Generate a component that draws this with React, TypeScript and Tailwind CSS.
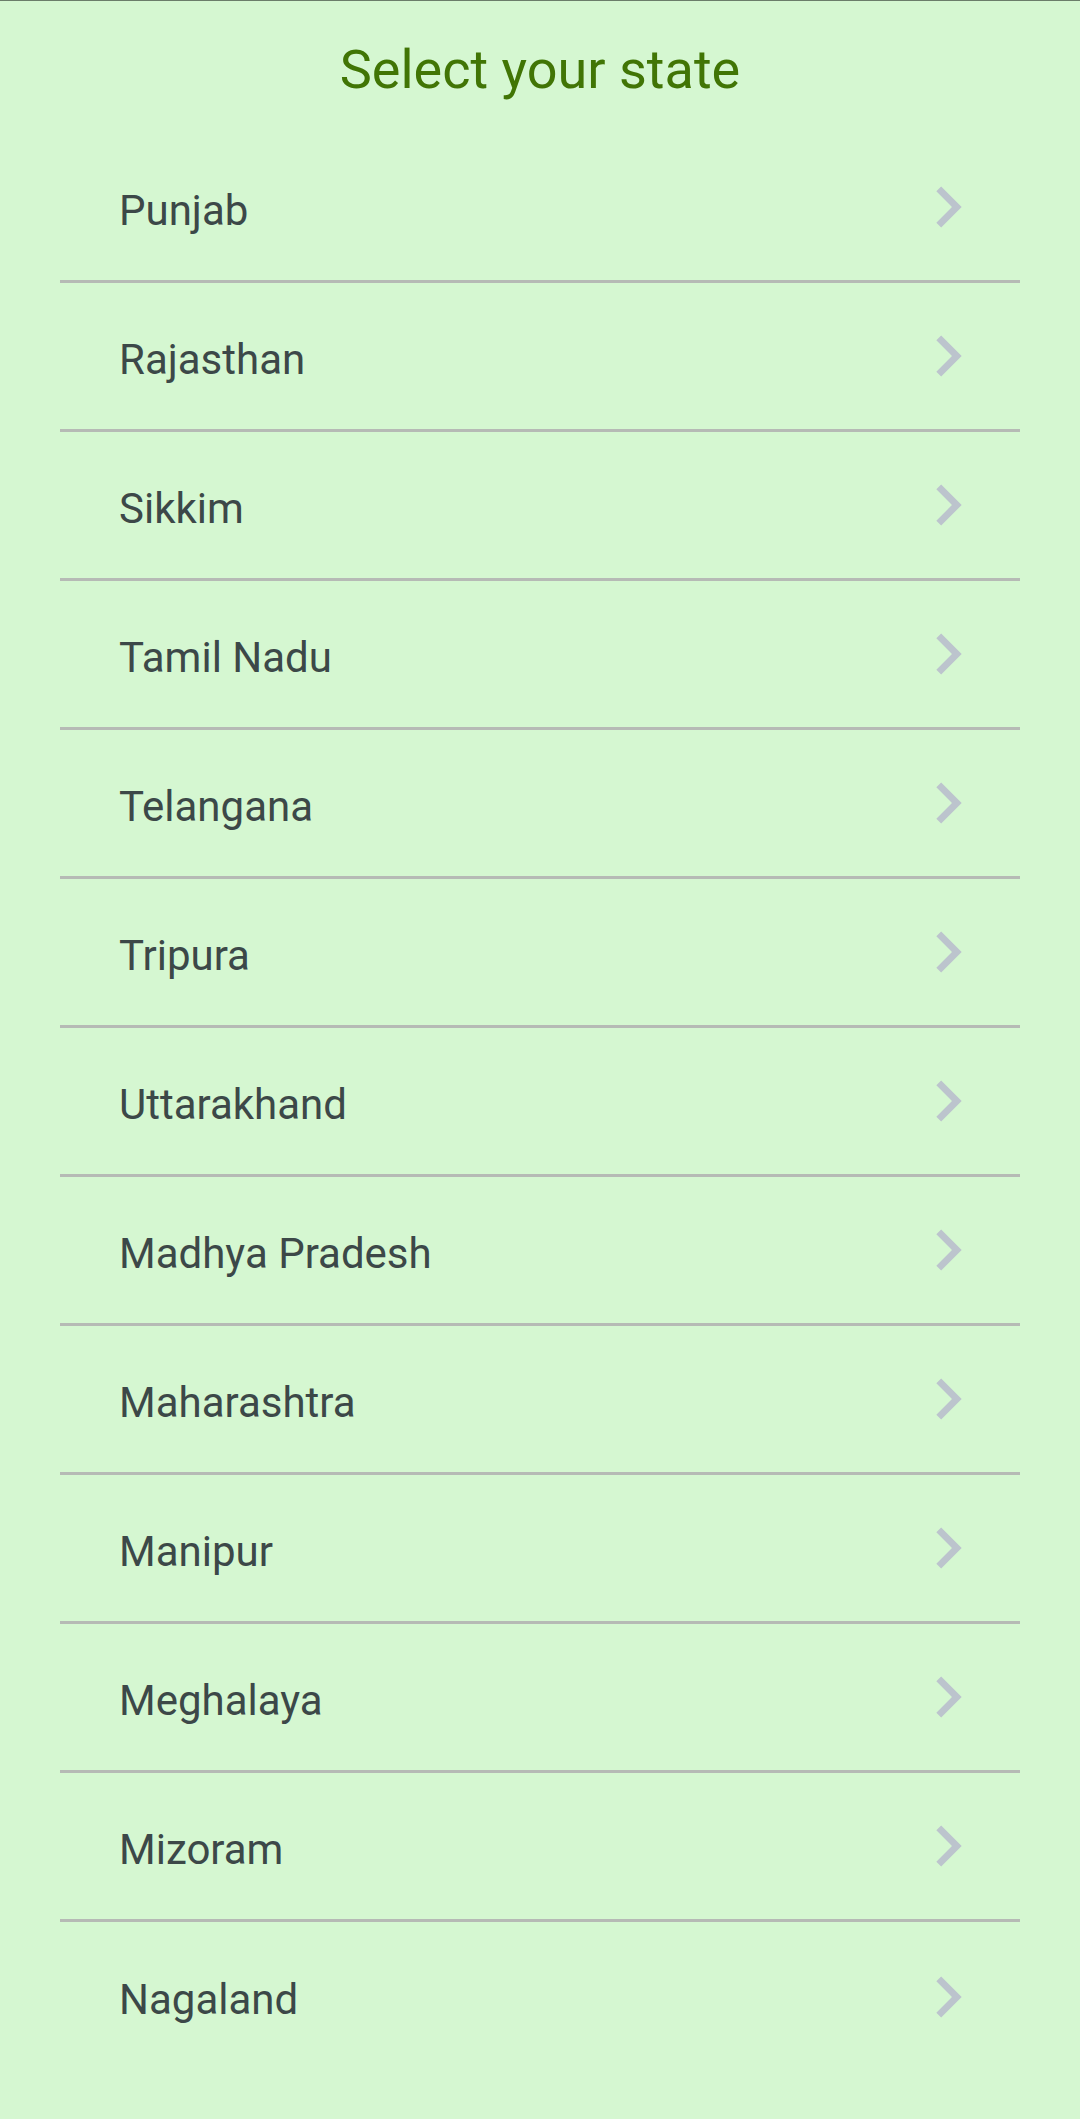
import React from "react";

const states = [
    "Punjab",
    "Rajasthan",
    "Sikkim",
    "Tamil Nadu",
    "Telangana",
    "Tripura",
    "Uttarakhand",
    "Madhya Pradesh",
    "Maharashtra",
    "Manipur",
    "Meghalaya",
    "Mizoram",
    "Nagaland",
];

const ChevronRight: React.FC = () => (
    <svg viewBox="0 0 24 24" className="w-[82px] h-[82px] shrink-0" fill="#bcc4cd">
        <path d="M10 6L8.59 7.41 13.17 12l-4.58 4.59L10 18l6-6z" />
    </svg>
);

const App: React.FC = () => {
    return (
        <div
            className="min-h-[2119px] bg-[#d5f7d1] border-t border-[#6b7d6a]"
            style={{ fontFamily: "Roboto, 'Noto Sans', sans-serif" }}
        >
            <h1 className="pt-[42px] mb-[37px] text-center text-[54px] leading-none text-[#417505]">
                Select your state
            </h1>
            <ul className="mx-[60px]">
                {states.map((state, i) => (
                    <li
                        key={state}
                        className={`flex items-center justify-between h-[149px] pl-[59px] pr-[31px] ${
                            i < states.length - 1 ? "border-b-[3px] border-[#b6bab5]" : ""
                        }`}
                    >
                        <span className="mt-[7px] text-[42px] leading-none text-[#3c4848]">{state}</span>
                        <ChevronRight />
                    </li>
                ))}
            </ul>
        </div>
    );
};

export default App;
